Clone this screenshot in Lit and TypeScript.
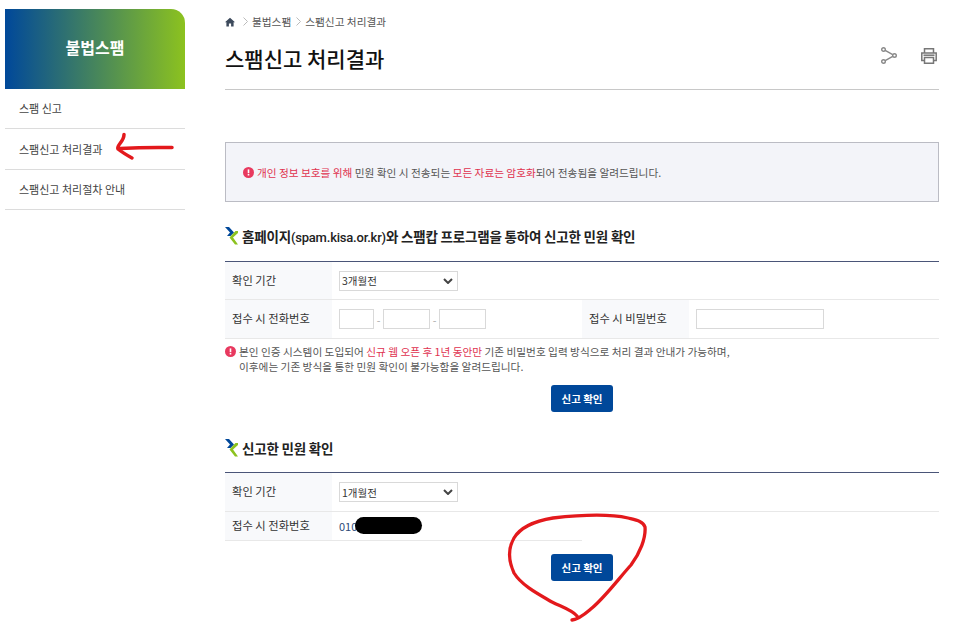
import { LitElement, html, css, svg } from 'lit';
import { customElement } from 'lit/decorators.js';

const font = css`"Noto Sans CJK KR", "Noto Sans", sans-serif`;

const logoMark = html`<svg class="mark" width="14" height="18" viewBox="0 0 14 18">
  <path d="M0 0h4l5 5.500-3.500 3.500H2l3-3.500z" fill="#00489a"/>
  <path d="M13 4h-2.500L4.500 10.500 10 17.500h3l-5-7 5-4.500z" fill="#8cc21f"/>
</svg>`;

const alertIcon = html`<svg class="alert" width="11" height="11" viewBox="0 0 11 11">
  <circle cx="5.5" cy="5.5" r="5.5" fill="#e8395f"/>
  <rect x="4.7" y="2.4" width="1.6" height="3.8" fill="#fff"/>
  <rect x="4.7" y="7" width="1.6" height="1.5" fill="#fff"/>
</svg>`;

@customElement('app-root')
export class AppRoot extends LitElement {
  static styles = css`
    :host {
      display: block;
      position: relative;
      width: 957px;
      height: 637px;
      background: #fff;
      overflow: hidden;
      font-family: ${font};
      color: #555;
      font-size: 10.66px;
    }
    .layout {
      display: flex;
      align-items: flex-start;
      padding-left: 5px;
    }
    .side {
      width: 180px;
      flex: none;
      padding-top: 9px;
    }
    .side-title {
      height: 80px;
      box-sizing: border-box;
      padding-bottom: 5px;
      border-top-right-radius: 14px;
      background: linear-gradient(90deg, #00489a, #8cc21f);
      color: #fff;
      display: flex;
      align-items: center;
      justify-content: center;
      font-size: 16px;
      font-weight: 700;
    }
    .side ul {
      list-style: none;
      margin: 0;
      padding: 0;
    }
    .side li {
      height: 40px;
      box-sizing: border-box;
      border-bottom: 1px solid #dcdcdc;
      padding: 0 0 2px 14px;
      display: flex;
      align-items: center;
      color: #444;
      font-size: 11px;
    }
    .side li.tall { height: 41px; padding-bottom: 1px; }
    .main {
      width: 714px;
      margin-left: 40px;
      flex: none;
    }
    .head {
      height: 89px;
      box-sizing: border-box;
      position: relative;
    }
    .crumb {
      display: flex;
      align-items: center;
      gap: 4.5px;
      height: 44px;
      padding-bottom: 1px;
      box-sizing: border-box;
      color: #555;
    }
    .crumb svg { flex: none; }
    .crumb .home { margin-right: 3px; }
    h1 {
      margin: 0;
      font-size: 21px;
      line-height: 28px;
      font-weight: 500;
      color: #111;
    }
    .tools {
      position: absolute;
      right: 2px;
      top: 47px;
      display: flex;
      align-items: flex-start;
      gap: 24px;
    }
    .tools .printer { margin-top: 1px; }
    .rule {
      position: absolute;
      left: 0;
      top: 89px;
      width: 714px;
      height: 1px;
      background: #c8c8c8;
    }
    .notice {
      margin-top: 53px;
      height: 60px;
      box-sizing: border-box;
      border: 1px solid #bbbcc4;
      background: #f3f4f9;
      display: flex;
      align-items: center;
      gap: 3px;
      padding-left: 17px;
    }
    .red { color: #e0324f; }
    .alert { flex: none; }
    h2 {
      margin: 0;
      display: flex;
      align-items: center;
      gap: 3px;
      font-size: 13.5px;
      font-weight: 700;
      color: #222;
      letter-spacing: -0.2px;
      height: 20px;
      white-space: pre;
    }
    .latin {
      font-family: Roboto, sans-serif;
      font-size: 13px;
      font-weight: 500;
      letter-spacing: -0.2px;
    }
    .s1 { margin-top: 24px; }
    .s2 { margin-top: 26px; }
    .form {
      margin-top: 14px;
      border-top: 1px solid #4a5578;
    }
    .s1 + .form { margin-top: 15px; }
    .row {
      display: flex;
      border-bottom: 1px solid #e8e8e8;
      height: 39px;
      box-sizing: border-box;
    }
    .row.short { height: 29px; width: 357px; }
    .row.first { height: 38px; }
    .s2 + .form .row.first { height: 39px; }
    .th {
      width: 107px;
      flex: none;
      box-sizing: border-box;
      background: #f8f9fb;
      padding: 0 0 2px 7px;
      display: flex;
      align-items: center;
      color: #333;
      font-size: 11.3px;
    }
    .s1 + .form .row.first .th { padding-bottom: 1px; }
    .td {
      display: flex;
      align-items: center;
      padding-left: 7px;
      box-sizing: border-box;
    }
    .td.phone { width: 250px; }
    .dash {
      width: 9px;
      text-align: center;
      color: #aaa;
    }
    .box {
      height: 20px;
      box-sizing: border-box;
      border: 1px solid #d9d9d9;
      background: #fff;
    }
    .select {
      width: 119px;
      height: 20px;
      box-sizing: border-box;
      border: 1px solid #d9d9d9;
      display: flex;
      align-items: center;
      justify-content: space-between;
      padding: 0 4px 0 2px;
      color: #333;
      font-size: 10.5px;
    }
    .num { color: #2d4a78; font-size: 11px; position: relative; }
    .mask {
      position: absolute;
      left: 16px;
      top: -1px;
      width: 67px;
      height: 17px;
      border-radius: 8.5px;
      background: #000;
    }
    .hint {
      display: flex;
      gap: 3px;
      margin-top: 5px;
      line-height: 15px;
    }
    .hint .alert { margin-top: 2px; }
    .actions {
      display: flex;
      justify-content: center;
      margin-top: 11px;
    }
    .btn {
      width: 62px;
      height: 27px;
      border-radius: 3px;
      background: #00489a;
      color: #fff;
      font-weight: 700;
      font-size: 10.5px;
      display: flex;
      align-items: center;
      justify-content: center;
    }
    .actions.low { margin-top: 13px; }
    .ink {
      position: absolute;
      left: 0;
      top: 0;
      pointer-events: none;
    }
  `;

  render() {
    const chev = svg`<path d="M1 1l4 4 4-4" fill="none" stroke="#444" stroke-width="2"/>`;
    const sep = html`<svg width="5" height="9" viewBox="0 0 5 9"><path d="M.5.5l4 4-4 4" fill="none" stroke="#bbb"/></svg>`;
    return html`
      <div class="layout">
        <aside class="side">
          <div class="side-title">불법스팸</div>
          <ul>
            <li>스팸 신고</li>
            <li class="tall">스팸신고 처리결과</li>
            <li>스팸신고 처리절차 안내</li>
          </ul>
        </aside>
        <main class="main">
          <div class="head">
            <div class="crumb">
              <svg class="home" width="10" height="10" viewBox="0 0 10 10"><path d="M5 .8L0 5.2h1.4V9.400h2.500V6.400h2.200v3h2.500V5.200H10z" fill="#3d4a5c"/></svg>
              ${sep}<span>불법스팸</span>${sep}<span>스팸신고 처리결과</span>
            </div>
            <h1>스팸신고 처리결과</h1>
            <div class="tools">
              <svg width="16" height="17" viewBox="0 0 16 17" fill="none" stroke="#888" stroke-width="1.400">
                <circle cx="2.500" cy="2.500" r="1.800"/><circle cx="2.500" cy="14.500" r="1.800"/><circle cx="13.500" cy="8.500" r="1.800"/>
                <path d="M4.200 3.400l7.500 4.200M4.200 13.600l7.500-4.200"/>
              </svg>
              <svg class="printer" width="16" height="16" viewBox="0 0 16 16" fill="none" stroke="#777" stroke-width="1.500">
                <path d="M3.500 5V.8h9V5M3.500 12.500H.8V5h14.400v7.500h-2.700"/><path d="M3.500 9.500h9v5.700h-9z"/><path d="M2.500 7.200h11"/>
              </svg>
            </div>
            <div class="rule"></div>
          </div>

          <div class="notice">
            ${alertIcon}
            <span><span class="red">개인 정보 보호를 위해</span> 민원 확인 시 전송되는 <span class="red">모든 자료는 암호화</span>되어 전송됨을 알려드립니다.</span>
          </div>

          <h2 class="s1">${logoMark}<span>홈페이지<span class="latin">(spam.kisa.or.kr)</span>와 스팸캅 프로그램을 통하여 신고한 민원 확인</span></h2>
          <div class="form">
            <div class="row first">
              <div class="th">확인 기간</div>
              <div class="td">
                <div class="select"><span>3개월전</span><svg width="10" height="6" viewBox="0 0 10 6">${chev}</svg></div>
              </div>
            </div>
            <div class="row">
              <div class="th">접수 시 전화번호</div>
              <div class="td phone">
                <div class="box" style="width:35px"></div><span class="dash">-</span><div class="box" style="width:47px"></div><span class="dash">-</span><div class="box" style="width:47px"></div>
              </div>
              <div class="th">접수 시 비밀번호</div>
              <div class="td"><div class="box" style="width:128px"></div></div>
            </div>
          </div>
          <div class="hint">
            ${alertIcon}
            <span>본인 인증 시스템이 도입되어 <span class="red">신규 웹 오픈 후 1년 동안만</span> 기존 비밀번호 입력 방식으로 처리 결과 안내가 가능하며,<br />이후에는 기존 방식을 통한 민원 확인이 불가능함을 알려드립니다.</span>
          </div>
          <div class="actions"><div class="btn">신고 확인</div></div>

          <h2 class="s2">${logoMark}신고한 민원 확인</h2>
          <div class="form">
            <div class="row first">
              <div class="th">확인 기간</div>
              <div class="td">
                <div class="select"><span>1개월전</span><svg width="10" height="6" viewBox="0 0 10 6">${chev}</svg></div>
              </div>
            </div>
            <div class="row short">
              <div class="th">접수 시 전화번호</div>
              <div class="td"><span class="num">010<span class="mask"></span></span></div>
            </div>
          </div>
          <div class="actions low"><div class="btn">신고 확인</div></div>
        </main>
      </div>
      <svg class="ink" width="957" height="637" viewBox="0 0 957 637" fill="none" stroke="#e3191c" stroke-linecap="round" stroke-linejoin="round">
        <path stroke-width="3.500" d="M124 134.500q0 4-4 9q-3 4-2 5.500q5 4 14 9M120 148.500q25-1.500 52-1"/>
        <path stroke-width="3.300" d="M572 620C580 619 586 613 592 608C606 596 620 577 631 565C640 553 646 538 645 527C643 521 636 520 628 518C610 514 580 515 553 518C535 521 520 528 514 538C507 550 509 562 514 573C522 586 540 595 552 602C562 607 572 610 577 616"/>
      </svg>
    `;
  }
}
